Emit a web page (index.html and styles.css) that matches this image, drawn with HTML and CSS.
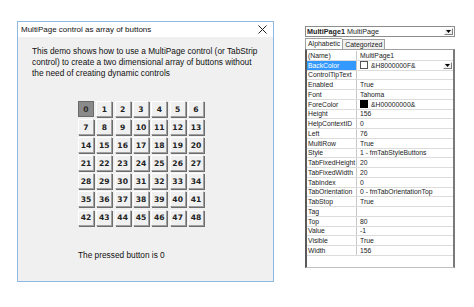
FILE: index.html
```html
<!DOCTYPE html>
<html>
<head>
<meta charset="utf-8">
<link rel="stylesheet" href="styles.css">
</head>
<body>
<div class="page">
  <div class="dialog">
    <div class="titlebar">
      <span class="title">MultiPage control as array of buttons</span>
      <svg class="close" width="9" height="9" viewBox="0 0 9 9"><path d="M0.5 0.5 L8.5 8.5 M8.5 0.5 L0.5 8.5" stroke="#222" stroke-width="1" fill="none"/></svg>
    </div>
    <div class="dlgbody">
      <p class="intro">This demo shows how to use a MultiPage control (or TabStrip<br>control) to create a two dimensional array of buttons without<br>the need of creating dynamic controls</p>
      <div class="grid">
        <div class="btn pressed">0</div><div class="btn">1</div><div class="btn">2</div><div class="btn">3</div><div class="btn">4</div><div class="btn">5</div><div class="btn">6</div>
        <div class="btn">7</div><div class="btn">8</div><div class="btn">9</div><div class="btn">10</div><div class="btn">11</div><div class="btn">12</div><div class="btn">13</div>
        <div class="btn">14</div><div class="btn">15</div><div class="btn">16</div><div class="btn">17</div><div class="btn">18</div><div class="btn">19</div><div class="btn">20</div>
        <div class="btn">21</div><div class="btn">22</div><div class="btn">23</div><div class="btn">24</div><div class="btn">25</div><div class="btn">26</div><div class="btn">27</div>
        <div class="btn">28</div><div class="btn">29</div><div class="btn">30</div><div class="btn">31</div><div class="btn">32</div><div class="btn">33</div><div class="btn">34</div>
        <div class="btn">35</div><div class="btn">36</div><div class="btn">37</div><div class="btn">38</div><div class="btn">39</div><div class="btn">40</div><div class="btn">41</div>
        <div class="btn">42</div><div class="btn">43</div><div class="btn">44</div><div class="btn">45</div><div class="btn">46</div><div class="btn">47</div><div class="btn">48</div>
      </div>
      <p class="status">The pressed button is 0</p>
    </div>
  </div>

  <div class="props">
    <div class="combo">
      <span class="combotext"><b>MultiPage1</b> MultiPage</span>
      <span class="dropbtn"><svg width="5" height="3" viewBox="0 0 5 3"><path d="M0 0 H5 L2.5 3 Z" fill="#000"/></svg></span>
    </div>
    <div class="tabs">
      <span class="tab active">Alphabetic</span><span class="tab">Categorized</span>
    </div>
    <div class="pgrid">
      <div class="rows">
        <div class="row"><span class="k">(Name)</span><span class="v">MultiPage1</span></div>
        <div class="row sel"><span class="k">BackColor</span><span class="v"><i class="sw white"></i>&amp;H8000000F&amp;<span class="dropbtn small"><svg width="5" height="3" viewBox="0 0 5 3"><path d="M0 0 H5 L2.5 3 Z" fill="#000"/></svg></span></span></div>
        <div class="row"><span class="k">ControlTipText</span><span class="v"></span></div>
        <div class="row"><span class="k">Enabled</span><span class="v">True</span></div>
        <div class="row"><span class="k">Font</span><span class="v">Tahoma</span></div>
        <div class="row"><span class="k">ForeColor</span><span class="v"><i class="sw black"></i>&amp;H00000000&amp;</span></div>
        <div class="row"><span class="k">Height</span><span class="v">156</span></div>
        <div class="row"><span class="k">HelpContextID</span><span class="v">0</span></div>
        <div class="row"><span class="k">Left</span><span class="v">76</span></div>
        <div class="row"><span class="k">MultiRow</span><span class="v">True</span></div>
        <div class="row"><span class="k">Style</span><span class="v">1 - fmTabStyleButtons</span></div>
        <div class="row"><span class="k">TabFixedHeight</span><span class="v">20</span></div>
        <div class="row"><span class="k">TabFixedWidth</span><span class="v">20</span></div>
        <div class="row"><span class="k">TabIndex</span><span class="v">0</span></div>
        <div class="row"><span class="k">TabOrientation</span><span class="v">0 - fmTabOrientationTop</span></div>
        <div class="row"><span class="k">TabStop</span><span class="v">True</span></div>
        <div class="row"><span class="k">Tag</span><span class="v"></span></div>
        <div class="row"><span class="k">Top</span><span class="v">80</span></div>
        <div class="row"><span class="k">Value</span><span class="v">-1</span></div>
        <div class="row"><span class="k">Visible</span><span class="v">True</span></div>
        <div class="row"><span class="k">Width</span><span class="v">156</span></div>
      </div>
    </div>
  </div>
</div>
</body>
</html>
```
FILE: styles.css
```css
html, body {
  margin: 0;
  padding: 0;
  background: #ffffff;
}
body {
  width: 474px;
  height: 307px;
  overflow: hidden;
  font-family: "Liberation Sans", Arial, sans-serif;
  color: #1a1a1a;
}
.page {
  display: flex;
  align-items: flex-start;
  padding: 21px 0 0 17px;
}
.dialog {
  width: 255px;
  height: 259px;
  border: 1px solid #8fb8e2;
  display: flex;
  flex-direction: column;
  background: #f0f0f0;
}
.titlebar {
  height: 15px;
  background: #ffffff;
  display: flex;
  align-items: center;
  justify-content: space-between;
  padding: 0 6px 0 3px;
}
.title {
  font-size: 8px;
  color: #111;
}
.close {
  display: block;
}
.dlgbody {
  flex: 1;
  padding: 9px 0 0 14px;
  display: flex;
  flex-direction: column;
}
.intro {
  margin: 0;
  white-space: nowrap;
  font-size: 8.3px;
  line-height: 11px;
  color: #111;
}
.grid {
  margin: 22px 0 0 46px;
  display: grid;
  grid-template-columns: repeat(7, 16px);
  grid-auto-rows: 16px;
  column-gap: 2.33px;
  row-gap: 2.1px;
}
.btn {
  box-sizing: border-box;
  background: #f0f0f0;
  border-top: 1px solid #ffffff;
  border-left: 1px solid #ffffff;
  border-right: 1px solid #a0a0a0;
  border-bottom: 1px solid #a0a0a0;
  box-shadow: 1px 1px 0 #6d6d6d;
  font-family: "DejaVu Sans", Tahoma, sans-serif;
  font-weight: bold;
  font-size: 7.6px;
  color: #222;
  display: flex;
  align-items: center;
  justify-content: center;
}
.btn.pressed {
  background: #8a8a8a;
  border-color: #6a6a6a;
  box-shadow: none;
  color: #2a2a2a;
}
.status {
  margin: 24px 0 0 46px;
  font-size: 8.3px;
  color: #111;
}

/* properties window */
.props {
  margin: 5px 0 0 31px;
  width: 150px;
  display: flex;
  flex-direction: column;
  font-family: "Liberation Sans", Arial, sans-serif;
  font-size: 6.8px;
  color: #222;
}
.combo {
  height: 9px;
  width: 148px;
  border: 1px solid #8c8c8c;
  background: #fff;
  display: flex;
  align-items: center;
  justify-content: space-between;
}
.combotext {
  padding-left: 1px;
  font-size: 7.2px;
}
.combotext b {
  font-weight: bold;
}
.dropbtn {
  width: 9px;
  height: 7px;
  margin-right: 1px;
  box-sizing: border-box;
  background: #f0f0f0;
  border-top: 1px solid #fff;
  border-left: 1px solid #fff;
  border-right: 1px solid #808080;
  border-bottom: 1px solid #808080;
  display: flex;
  align-items: center;
  justify-content: center;
}
.dropbtn svg { display: block; }
.tabs {
  margin-top: 2px;
  height: 10px;
  display: flex;
  align-items: flex-end;
}
.tab {
  height: 9px;
  padding: 0 2px;
  border: 1px solid #a0a0a0;
  border-bottom: none;
  background: #f0f0f0;
  font-size: 6.9px;
  line-height: 9px;
}
.tab.active {
  height: 10px;
  background: #fff;
  border-right: none;
}
.pgrid {
  height: 219px;
  box-sizing: border-box;
  border-left: 2px solid #5a5a5a;
  border-top: 1px solid #a0a0a0;
  border-right: 2px solid #7a7a7a;
  border-bottom: 1px solid #c0c0c0;
  background: #fff;
  padding-top: 1px;
}
.rows {
  display: flex;
  flex-direction: column;
}
.row {
  height: 9.75px;
  box-sizing: border-box;
  border-bottom: 1px solid #dcdcdc;
  display: flex;
  align-items: center;
}
.k {
  width: 50px;
  box-sizing: border-box;
  height: 100%;
  padding-left: 1px;
  border-right: 1px solid #c8c8c8;
  display: flex;
  align-items: center;
  white-space: nowrap;
  overflow: hidden;
}
.v {
  flex: 1;
  padding-left: 3px;
  display: flex;
  align-items: center;
  white-space: nowrap;
}
.row.sel .k {
  background: #3399ff;
  color: #fff;
}
.sw {
  display: inline-block;
  width: 6px;
  height: 6px;
  margin-right: 3px;
  border: 1px solid #555;
}
.sw.white { background: #fff; }
.sw.black { background: #000; border-color: #000; }
.dropbtn.small {
  margin-left: auto;
  margin-right: 1px;
}
```
